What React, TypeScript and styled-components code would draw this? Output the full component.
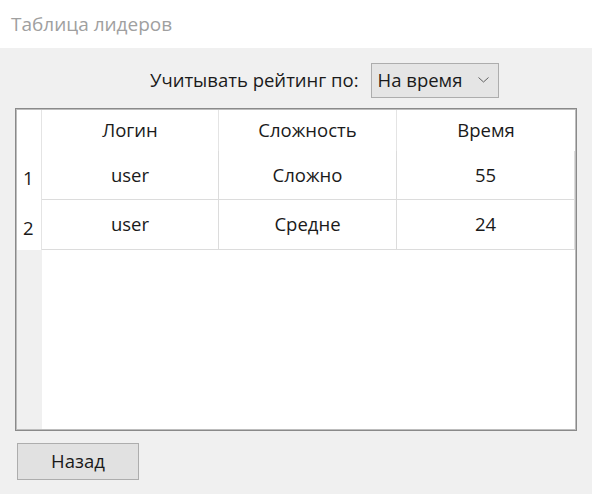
import React from "react";
import styled, { createGlobalStyle } from "styled-components";

const Global = createGlobalStyle`
  html, body { margin: 0; padding: 0; }
  body {
    width: 592px;
    height: 494px;
    overflow: hidden;
    background: #f0f0f0;
    font-family: "Open Sans", "Noto Sans", sans-serif;
    color: #1a1a1a;
  }
`;

const Window = styled.div`
  width: 592px;
  height: 494px;
  display: flex;
  flex-direction: column;
  background: #f0f0f0;
`;

const TitleBar = styled.div`
  height: 48px;
  flex: none;
  background: #ffffff;
  display: flex;
  align-items: center;
  padding-left: 11px;
  box-sizing: border-box;
  font-size: 19px;
  color: #a0a0a0;
`;

const Body = styled.div`
  display: flex;
  flex-direction: column;
  padding: 15px 15px 0 15px;
`;

const FilterRow = styled.div`
  display: flex;
  align-items: center;
  gap: 12px;
  padding-left: 135px;
  height: 35px;
`;

const Label = styled.span`
  font-size: 18.5px;
  color: #1a1a1a;
  padding-bottom: 2px;
`;

const Combo = styled.div`
  width: 128px;
  height: 35px;
  box-sizing: border-box;
  background: #e5e5e5;
  border: 1px solid #adadad;
  display: flex;
  align-items: center;
  justify-content: space-between;
  padding: 0 9px 2px 6px;
  font-size: 18.5px;
`;

const Table = styled.div`
  margin-top: 10px;
  width: 562px;
  height: 323px;
  box-sizing: border-box;
  border: 1px solid #8a8a8a;
  box-shadow: inset 0 0 0 1px #bdbdbd;
  background: #ffffff;
  padding: 1px;
  display: grid;
  grid-template-columns: 25px 177px 178px 178px 1fr;
  grid-template-rows: 41px 49px 50px 1fr;
`;

const Corner = styled.div`
  background: #ffffff;
  border-right: 1px solid #e4e4e4;
`;

const HeaderCell = styled.div<{ $last?: boolean }>`
  background: #ffffff;
  display: flex;
  align-items: center;
  justify-content: center;
  font-size: 18.5px;
  padding-bottom: 2px;
  border-right: ${(p) => (p.$last ? "none" : "1px solid #e4e4e4")};
  grid-column: ${(p) => (p.$last ? "span 2" : "auto")};
`;

const RowHead = styled.div`
  background: #ffffff;
  display: flex;
  align-items: center;
  padding-left: 6px;
  padding-top: 4px;
  font-size: 18.5px;
  border-right: 1px solid #e4e4e4;
`;

const Cell = styled.div`
  display: flex;
  align-items: center;
  justify-content: center;
  font-size: 18.5px;
  padding-bottom: 2px;
  border-right: 1px solid #dcdcdc;
  border-bottom: 1px solid #dcdcdc;
`;

const Spacer = styled.div`
  background: #ffffff;
`;

const EmptyHead = styled.div`
  background: #f0f0f0;
`;

const EmptyArea = styled.div`
  grid-column: span 4;
  background: #ffffff;
`;

const Footer = styled.div`
  display: flex;
  padding: 12px 0 0 2px;
`;

const Button = styled.button`
  width: 122px;
  height: 37px;
  box-sizing: border-box;
  background: #e1e1e1;
  border: 1px solid #adadad;
  font-family: "Open Sans", "Noto Sans", sans-serif;
  font-size: 18.5px;
  color: #1a1a1a;
  padding: 0 0 2px 0;
`;

const Chevron = () => (
  <svg width="11" height="6" viewBox="0 0 11 6" fill="none">
    <path d="M0.5 0.5 L5.5 5 L10.5 0.5" stroke="#606060" strokeWidth="1" />
  </svg>
);

const rows = [
  { n: 1, login: "user", diff: "Сложно", time: "55" },
  { n: 2, login: "user", diff: "Средне", time: "24" },
];

export default function App() {
  return (
    <Window>
      <Global />
      <TitleBar>Таблица лидеров</TitleBar>
      <Body>
        <FilterRow>
          <Label>Учитывать рейтинг по:</Label>
          <Combo>
            <span>На время</span>
            <Chevron />
          </Combo>
        </FilterRow>
        <Table>
          <Corner />
          <HeaderCell>Логин</HeaderCell>
          <HeaderCell>Сложность</HeaderCell>
          <HeaderCell $last>Время</HeaderCell>
          {rows.map((r) => (
            <React.Fragment key={r.n}>
              <RowHead>{r.n}</RowHead>
              <Cell>{r.login}</Cell>
              <Cell>{r.diff}</Cell>
              <Cell>{r.time}</Cell>
              <Spacer />
            </React.Fragment>
          ))}
          <EmptyHead />
          <EmptyArea />
        </Table>
        <Footer>
          <Button>Назад</Button>
        </Footer>
      </Body>
    </Window>
  );
}
